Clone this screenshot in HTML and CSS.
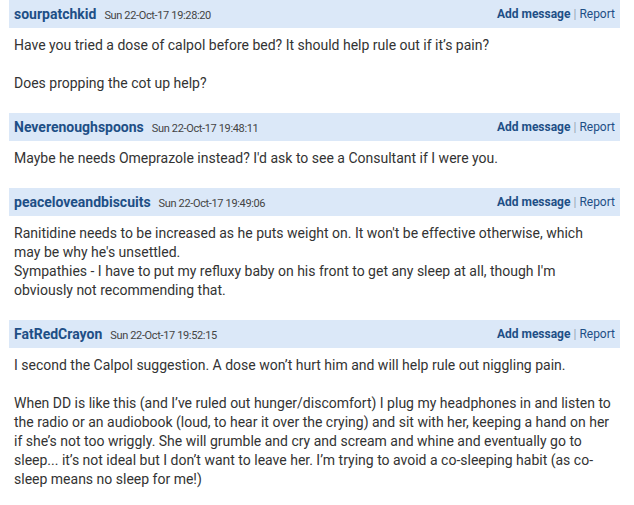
FILE: index.html
```html
<!DOCTYPE html>
<html lang="en">
<head>
  <meta charset="UTF-8">
  <meta name="viewport" content="width=device-width, initial-scale=1.0">
  <link rel="stylesheet" href="styles.css">
  <title>Thread</title>
</head>
<body>
  <div class="thread">
    <div class="post">
      <div class="post-head">
        <div class="who">
          <span class="name">sourpatchkid</span>
          <span class="date">Sun 22-Oct-17 19:28:20</span>
        </div>
        <div class="actions"><a href="#" class="add">Add message</a> <span class="sep">|</span> <a href="#">Report</a></div>
      </div>
      <div class="post-body">
        <p>Have you tried a dose of calpol before bed? It should help rule out if it’s pain?</p>
        <p>Does propping the cot up help?</p>
      </div>
    </div>

    <div class="post">
      <div class="post-head">
        <div class="who">
          <span class="name">Neverenoughspoons</span>
          <span class="date">Sun 22-Oct-17 19:48:11</span>
        </div>
        <div class="actions"><a href="#" class="add">Add message</a> <span class="sep">|</span> <a href="#">Report</a></div>
      </div>
      <div class="post-body">
        <p>Maybe he needs Omeprazole instead? I'd ask to see a Consultant if I were you.</p>
      </div>
    </div>

    <div class="post">
      <div class="post-head">
        <div class="who">
          <span class="name">peaceloveandbiscuits</span>
          <span class="date">Sun 22-Oct-17 19:49:06</span>
        </div>
        <div class="actions"><a href="#" class="add">Add message</a> <span class="sep">|</span> <a href="#">Report</a></div>
      </div>
      <div class="post-body">
        <p>Ranitidine needs to be increased as he puts weight on. It won't be effective otherwise, which<br>may be why he's unsettled.<br>Sympathies - I have to put my refluxy baby on his front to get any sleep at all, though I'm obviously not recommending that.</p>
      </div>
    </div>

    <div class="post">
      <div class="post-head">
        <div class="who">
          <span class="name">FatRedCrayon</span>
          <span class="date">Sun 22-Oct-17 19:52:15</span>
        </div>
        <div class="actions"><a href="#" class="add">Add message</a> <span class="sep">|</span> <a href="#">Report</a></div>
      </div>
      <div class="post-body">
        <p>I second the Calpol suggestion. A dose won’t hurt him and will help rule out niggling pain.</p>
        <p>When DD is like this (and I’ve ruled out hunger/discomfort) I plug my headphones in and listen to the radio or an audiobook (loud, to hear it over the crying) and sit with her, keeping a hand on her if she’s not too wriggly. She will grumble and cry and scream and whine and eventually go to sleep... it’s not ideal but I don’t want to leave her. I’m trying to avoid a co-sleeping habit (as co-sleep means no sleep for me!)</p>
      </div>
    </div>
  </div>
</body>
</html>
```

FILE: styles.css
```css
body {
  margin: 0;
  padding: 0;
  background: #fff;
  font-family: Roboto, "Liberation Sans", Arial, sans-serif;
  color: #333;
}

.thread {
  width: 611px;
  margin-left: 9px;
}

.post-head {
  display: flex;
  align-items: center;
  justify-content: space-between;
  height: 28px;
  padding: 0 5px;
  background: #dbe8f8;
}

.who {
  display: flex;
  align-items: baseline;
  gap: 8px;
}

.name {
  font-size: 14px;
  font-weight: bold;
  color: #1e4f86;
}

.date {
  font-size: 11px;
  letter-spacing: -0.35px;
  color: #444;
}

.actions {
  font-size: 12px;
  color: #1e4f86;
}

.actions a {
  color: #1e4f86;
  text-decoration: none;
}

.actions .add {
  font-weight: bold;
}

.sep {
  color: #9aa7b5;
}

.post-body {
  padding: 8px 5px 20px;
  font-size: 14px;
  line-height: 19px;
}

.post-body p {
  margin: 0 0 19px;
}

.post-body p:last-child {
  margin-bottom: 0;
}
```
